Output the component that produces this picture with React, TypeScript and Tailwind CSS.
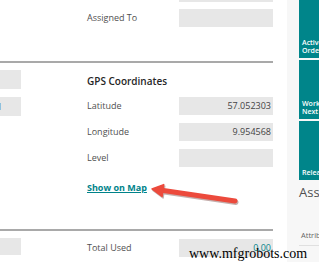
import React from "react";

const label = "text-[9px] text-[#505050] leading-[18px] w-[92px] whitespace-nowrap";
const box = "h-[18px] w-[94px] bg-[#e7e7e7] text-right pr-[2px] text-[9px] leading-[18px] text-[#444]";

function Field({ name, value, teal }: { name: string; value?: string; teal?: boolean }) {
  return (
    <div className="flex h-[18px]">
      <div className={label}>{name}</div>
      <div className={box + (teal ? " text-[#00838a]" : "")}>{value}</div>
    </div>
  );
}

function Tile({ lines, h }: { lines: string[]; h: string }) {
  return (
    <div className={`${h} bg-[#00858a] flex flex-col justify-end pl-[3px] pb-[3px] text-white text-[7px] font-semibold leading-[8px] whitespace-nowrap`}>
      {lines.map((l) => (
        <div key={l}>{l}</div>
      ))}
    </div>
  );
}

export default function App() {
  return (
    <div className="relative w-[319px] h-[262px] overflow-hidden bg-white flex" style={{ fontFamily: "'Open Sans', 'Noto Sans', sans-serif" }}>
      <div className="w-[287px] shrink-0 flex flex-col">
        {/* section: assignment */}
        <div className="w-[273px] h-[63px] border-b-2 border-[#a9a9a9] flex">
          <div className="w-[21px]" />
          <div className="ml-[66px] flex flex-col">
            <div className="-mt-[16px] ml-[92px] h-[18px] w-[94px] bg-[#e7e7e7]" />
            <div className="mt-[7px]">
              <Field name="Assigned To" />
            </div>
          </div>
        </div>

        {/* section: gps */}
        <div className="w-[273px] h-[168px] border-b-2 border-[#a9a9a9] flex">
          <div className="w-[21px] flex flex-col">
            <div className="mt-[7px] h-[19px] bg-[#e7e7e7]" />
            <div className="mt-[8px] h-[19px] bg-[#e7e7e7] text-[9px] leading-[19px] text-[#1f3b63] overflow-hidden">
              <span className="-ml-[3px]">1</span>
            </div>
          </div>
          <div className="ml-[66px] flex flex-col">
            <div className="mt-[11px] h-[14px] text-[10px] leading-[14px] font-semibold text-[#262626]">GPS Coordinates</div>
            <div className="mt-[9px] flex flex-col gap-[8px]">
              <Field name="Latitude" value="57.052303" />
              <Field name="Longitude" value="9.954568" />
              <Field name="Level" />
            </div>
            <div className="mt-[14px] h-[14px] text-[9px] leading-[14px] font-bold text-[#00838a] underline underline-offset-[1px]">Show on Map</div>
          </div>
        </div>

        {/* section: totals */}
        <div className="w-[273px] flex">
          <div className="w-[21px]">
            <div className="mt-[7px] h-[17px] bg-[#e7e7e7]" />
          </div>
          <div className="ml-[66px] mt-[8px]">
            <Field name="Total Used" value="0.00" teal />
          </div>
        </div>
      </div>

      {/* factbox pane */}
      <div className="flex-1 bg-[#f7f7f7] pl-[12px] flex flex-col">
        <div className="flex flex-col gap-[2px]">
          <Tile h="h-[58px]" lines={["Active", "Orders"]} />
          <Tile h="h-[59px]" lines={["Work Orders", "Next Week"]} />
          <Tile h="h-[59px]" lines={["Released"]} />
        </div>
        <div className="mt-[4px] text-[13px] leading-[16px] text-[#505050] whitespace-nowrap">Assets</div>
        <div className="mt-[30px] pl-[2px] text-[7.5px] text-[#666] whitespace-nowrap">Attributes</div>
        <div className="mt-[4px] border-b border-[#e0e0e0]" />
      </div>

      {/* red annotation arrow */}
      <svg className="absolute left-0 top-0 pointer-events-none" width="319" height="262" viewBox="0 0 319 262">
        <g transform="translate(1 1.5)" fill="#5a1a14" stroke="#5a1a14" opacity="0.35">
          <line x1="235" y1="201" x2="160" y2="190" strokeWidth="5" strokeLinecap="round" />
          <polygon points="152,189 163.7,184.6 162.1,196.5" strokeWidth="1.5" strokeLinejoin="round" />
        </g>
        <g fill="#ec4a3c" stroke="#ec4a3c">
          <line x1="235" y1="201" x2="160" y2="190" strokeWidth="5" strokeLinecap="round" />
          <polygon points="152,189 163.7,184.6 162.1,196.5" strokeWidth="1.5" strokeLinejoin="round" />
        </g>
      </svg>

      {/* watermark */}
      <div className="absolute left-[189px] top-[246px] text-[14px] leading-[16px] text-black whitespace-nowrap" style={{ fontFamily: "'Liberation Serif', serif" }}>
        www.mfgrobots.com
      </div>
    </div>
  );
}
